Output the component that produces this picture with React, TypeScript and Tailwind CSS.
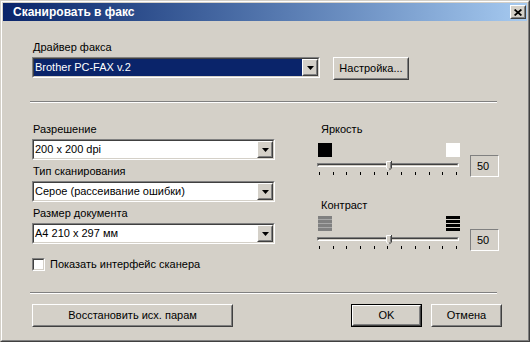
import React from "react";

type WithChildren = { className?: string; innerClassName?: string; children?: React.ReactNode };

function Raised({ className = "", innerClassName = "", children }: WithChildren) {
  return (
    <div className={`border border-t-white border-l-white border-r-[#404040] border-b-[#404040] ${className}`}>
      <div
        className={`h-full w-full border border-t-[#D4D0C8] border-l-[#D4D0C8] border-r-[#808080] border-b-[#808080] ${innerClassName}`}
      >
        {children}
      </div>
    </div>
  );
}

function Button({ className = "", children }: WithChildren) {
  return (
    <Raised className={`h-[23px] ${className}`} innerClassName="flex items-center justify-center">
      {children}
    </Raised>
  );
}

function Arrow() {
  return (
    <svg width="7" height="4" viewBox="0 0 7 4">
      <path d="M0 0 H7 L3.5 4 Z" fill="#000" />
    </svg>
  );
}

function Combo({ className = "", value, selected = false }: { className?: string; value: string; selected?: boolean }) {
  return (
    <div className={`h-[21px] border border-t-[#808080] border-l-[#808080] border-r-white border-b-white ${className}`}>
      <div className="flex h-full border border-t-[#404040] border-l-[#404040] border-r-[#D4D0C8] border-b-[#D4D0C8] bg-white">
        <div
          className={`flex flex-1 items-center pl-[1px] leading-[13px] ${selected ? "bg-[#0A246A] text-white" : "bg-white text-black"}`}
        >
          {value}
        </div>
        <Raised className="h-full w-[16px] shrink-0" innerClassName="flex items-center justify-center bg-[#D4D0C8]">
          <Arrow />
        </Raised>
      </div>
    </div>
  );
}

function Thumb() {
  return (
    <svg width="6" height="10" viewBox="0 0 6 10" className="absolute left-[69px] top-0">
      <path d="M0 0 H6 V7 L3 10 L0 7 Z" fill="#D4D0C8" />
      <path d="M0.5 7 V0.5 H5" stroke="#fff" strokeWidth="1" fill="none" />
      <path d="M5.5 0 V7 L3 9.5" stroke="#404040" strokeWidth="1" fill="none" />
      <path d="M4.5 1 V6.7 L3 8.3" stroke="#808080" strokeWidth="1" fill="none" />
      <path d="M0.5 7 L3 9.5" stroke="#fff" strokeWidth="1" fill="none" />
    </svg>
  );
}

function Slider({ className = "" }: { className?: string }) {
  const ticks = Array.from({ length: 11 });
  return (
    <div className={className}>
      <div className="relative h-[10px]">
        <div className="absolute left-0 top-[2px] h-[4px] w-[142px] border border-t-[#808080] border-l-[#808080] border-r-white border-b-white">
          <div className="h-full border border-t-[#404040] border-l-[#404040] border-r-[#D4D0C8] border-b-[#D4D0C8]" />
        </div>
        <Thumb />
      </div>
      <div className="mt-[1px] flex h-[3px] w-[142px] justify-between px-[2px]">
        {ticks.map((_, i) => (
          <div key={i} className="h-full w-[1px] bg-black" />
        ))}
      </div>
    </div>
  );
}

function ValueBox({ className = "" }: { className?: string }) {
  return (
    <div
      className={`flex h-[22px] w-[29px] shrink-0 items-center justify-center pr-[3px] border border-t-[#808080] border-l-[#808080] border-r-white border-b-white ${className}`}
    >
      50
    </div>
  );
}

function Stripes({ bar, gap }: { bar: string; gap: string }) {
  return (
    <div className={`flex h-[15px] w-[14px] flex-col justify-between ${gap}`}>
      <div className={`h-[3px] ${bar}`} />
      <div className={`h-[3px] ${bar}`} />
      <div className={`h-[3px] ${bar}`} />
      <div className={`h-[3px] ${bar}`} />
    </div>
  );
}

function Label({ children, className = "" }: WithChildren) {
  return <div className={`h-[13px] leading-[13px] whitespace-nowrap ${className}`}>{children}</div>;
}

export default function App() {
  return (
    <div className="h-[342px] w-[530px] border border-t-[#D4D0C8] border-l-[#D4D0C8] border-r-[#404040] border-b-[#404040] bg-[#D4D0C8] font-['Liberation_Sans',Arial,sans-serif] text-[11px] text-black">
      <div className="flex h-full flex-col border border-t-white border-l-white border-r-[#808080] border-b-[#808080] p-[1px]">
        {/* Title bar */}
        <div className="flex h-[18px] shrink-0 items-center bg-linear-to-r from-[#0A246A] to-[#A6CAF0] pl-[10px] pr-[1px]">
          <span className="flex-1 text-[12px] font-bold text-white">Сканировать в факс</span>
          <Raised className="h-[14px] w-[16px]" innerClassName="flex items-center justify-center bg-[#D4D0C8]">
            <svg width="8" height="7" viewBox="0 0 8 7">
              <path d="M0.6 0.5 L7.4 6.5 M7.4 0.5 L0.6 6.5" stroke="#000" strokeWidth="1.7" fill="none" />
            </svg>
          </Raised>
        </div>

        {/* Body */}
        <div className="flex-1 pl-[29px] pr-[25px] pt-[20px]">
          <Label className="pl-[1px]">Драйвер факса</Label>
          <div className="mt-[3px] flex">
            <Combo className="w-[288px]" value="Brother PC-FAX v.2" selected />
            <Button className="ml-[13px] h-[21px] w-[76px]">Настройка...</Button>
          </div>

          <div className="-ml-[2px] mt-[21px] h-[2px] w-[467px] border-t border-b border-t-[#808080] border-b-white" />

          <div className="mt-[20px] flex">
            <div className="flex w-[243px] flex-col">
              <Label className="pl-[1px]">Разрешение</Label>
              <Combo className="mt-[3px]" value="200 x 200 dpi" />
              <Label className="mt-[5px] pl-[1px]">Тип сканирования</Label>
              <Combo className="mt-[3px]" value="Серое (рассеивание ошибки)" />
              <Label className="mt-[5px] pl-[1px]">Размер документа</Label>
              <Combo className="mt-[3px]" value="A4 210 x 297 мм" />
              <div className="mt-[14px] flex h-[13px] items-center">
                <div className="h-[13px] w-[13px] border border-t-[#808080] border-l-[#808080] border-r-white border-b-white">
                  <div className="h-full border border-t-[#404040] border-l-[#404040] border-r-[#D4D0C8] border-b-[#D4D0C8] bg-white" />
                </div>
                <span className="ml-[5px] whitespace-nowrap">Показать интерфейс сканера</span>
              </div>
            </div>

            <div className="ml-[42px] w-[182px]">
              <Label className="pl-[4px]">Яркость</Label>
              <div className="mt-[7px] flex items-start">
                <div className="w-[143px]">
                  <div className="flex h-[14px] justify-between pl-[1px]">
                    <div className="h-[14px] w-[14px] bg-black" />
                    <div className="h-[14px] w-[14px] bg-white" />
                  </div>
                  <Slider className="mt-[4px]" />
                </div>
                <ValueBox className="ml-[10px] mt-[12px]" />
              </div>

              <Label className="mt-[22px] pl-[4px]">Контраст</Label>
              <div className="mt-[4px] flex items-start">
                <div className="w-[143px]">
                  <div className="flex h-[15px] justify-between pl-[1px]">
                    <Stripes bar="bg-[#808080]" gap="bg-[#A8A8A8]" />
                    <Stripes bar="bg-black" gap="bg-[#D4D0C8]" />
                  </div>
                  <Slider className="mt-[4px]" />
                </div>
                <ValueBox className="ml-[10px] mt-[13px]" />
              </div>
            </div>
          </div>

          <div className="-ml-[2px] mt-[21px] h-[2px] w-[467px] border-t border-b border-t-[#808080] border-b-white" />

          <div className="mt-[10px] flex">
            <Button className="w-[201px]">Восстановить исх. парам</Button>
            <div className="flex-1" />
            <div className="h-[23px] w-[71px] border border-black">
              <Raised className="h-full w-full" innerClassName="flex items-center justify-center">
                OK
              </Raised>
            </div>
            <Button className="ml-[9px] w-[71px]">Отмена</Button>
          </div>
        </div>
      </div>
    </div>
  );
}
